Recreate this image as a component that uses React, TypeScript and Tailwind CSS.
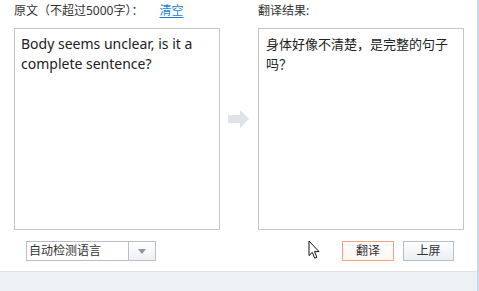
import React from "react";

const cjk = { fontFamily: '"Noto Sans", "Noto Sans CJK SC", sans-serif' };

function Cursor() {
  return (
    <svg width="13" height="20" viewBox="0 0 13 20" className="absolute left-[308px] top-[240px]">
      <path
        d="M1 1 L1 15.5 L4.3 12.4 L6.7 18.2 L8.9 17.3 L6.5 11.6 L11 11.6 Z"
        fill="#fff"
        stroke="#111"
        strokeWidth="1"
        strokeLinejoin="miter"
      />
    </svg>
  );
}

export default function App() {
  return (
    <div
      className="relative flex h-[291px] w-[479px] flex-col overflow-hidden border-r-2 border-[#cbd9e8] bg-white text-[#333]"
      style={cjk}
    >
      <div className="flex h-[28px] items-start pl-[14px] pt-[3px] text-[12px] leading-[16px]">
        <div className="flex w-[206px] items-center">
          <span>原文（不超过5000字）：</span>
          <a className="ml-[16px] text-[#1a7fd6] underline underline-offset-2">清空</a>
        </div>
        <div className="ml-[38px]">翻译结果:</div>
      </div>

      <div className="flex pl-[14px]">
        <div className="h-[202px] w-[206px] border border-[#c3c7cb] px-[6px] pt-[5px] text-[14px] leading-[20px] text-[#222]">
          Body seems unclear, is it a complete sentence?
        </div>
        <div className="flex w-[38px] items-center justify-center">
          <svg width="22" height="18" viewBox="0 0 22 18" className="-mt-[20px]">
            <path d="M0 5 H12 V0 L21 9 L12 18 V13 H0 Z" fill="#dfe3e9" />
          </svg>
        </div>
        <div className="h-[202px] w-[206px] border border-[#c3c7cb] px-[7px] pt-[5px] text-[13px] leading-[20px] text-[#222]">
          身体好像不清楚，是完整的句子吗？
        </div>
      </div>

      <div className="mt-[11px] flex h-[20px] items-stretch">
        <div className="ml-[26px] flex w-[130px] border border-[#b9bfc6] text-[12px]">
          <div className="flex flex-1 items-center pl-[2px] leading-none">自动检测语言</div>
          <div className="flex w-[27px] items-center justify-center border-l border-[#b9bfc6] bg-gradient-to-b from-white to-[#eef1f4]">
            <svg width="8" height="5" viewBox="0 0 8 5">
              <path d="M0 0 H8 L4 5 Z" fill="#8d97a2" />
            </svg>
          </div>
        </div>
        <button className="ml-[186px] flex w-[52px] items-center justify-center border border-[#f6a582] bg-gradient-to-b from-white to-[#fff6f0] text-[12px] leading-none text-[#333]">
          翻译
        </button>
        <button className="ml-[9px] flex w-[51px] items-center justify-center border border-[#b7bec6] bg-gradient-to-b from-white to-[#eaeff4] text-[12px] leading-none text-[#333]">
          上屏
        </button>
      </div>

      <div className="mt-auto h-[20px] border-t border-[#dfe3e8] bg-[#eef1f4]" />
      <Cursor />
    </div>
  );
}
